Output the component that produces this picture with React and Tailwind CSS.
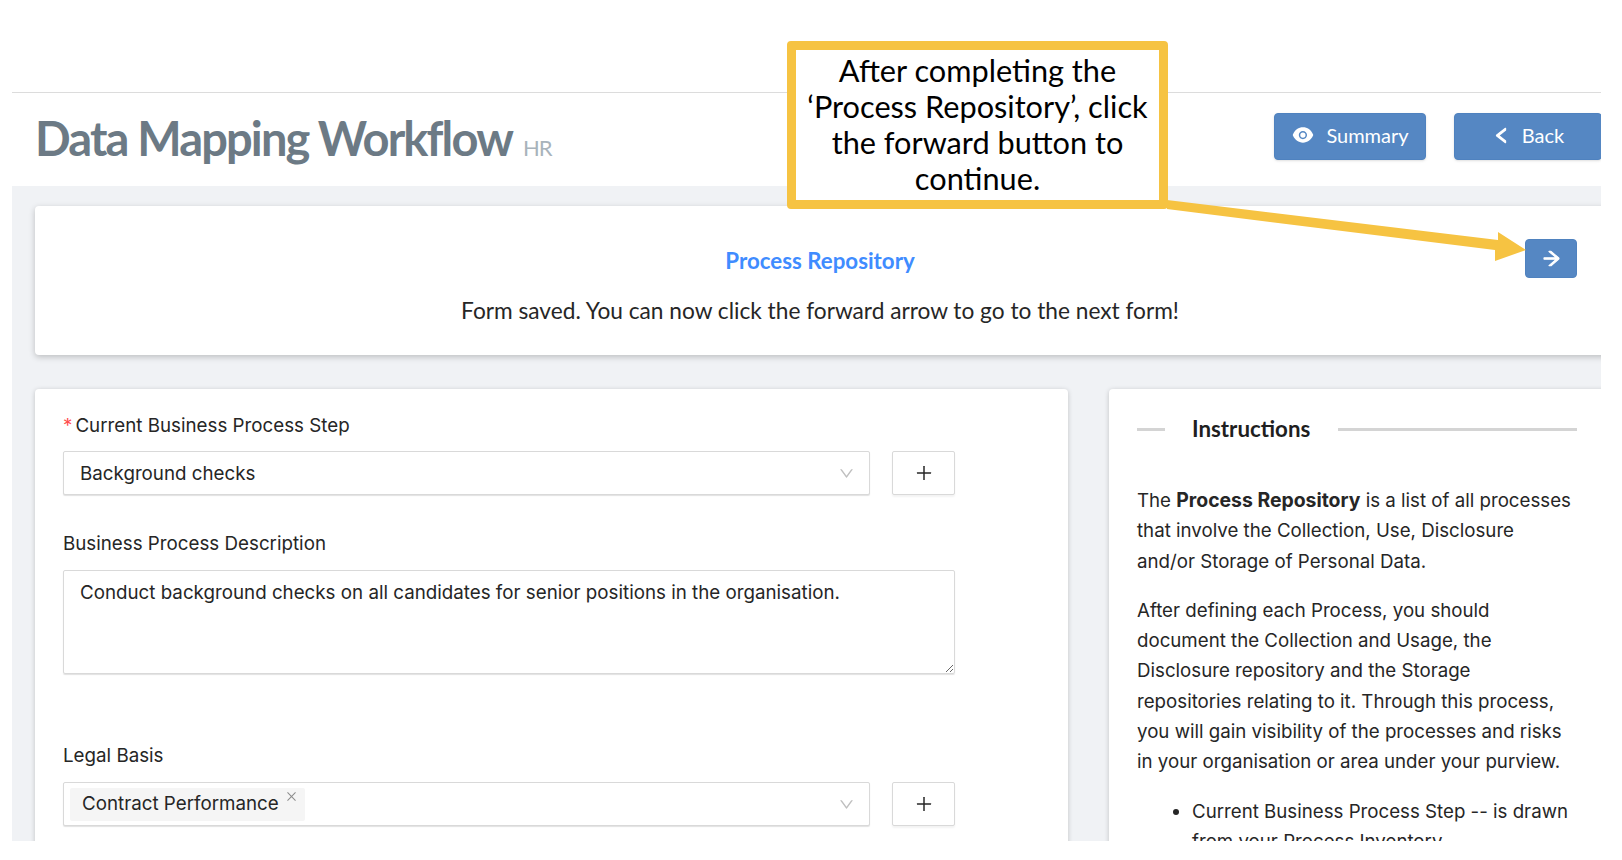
import React from "react";
import { AiFillEye, AiOutlineLeft, AiOutlineArrowRight, AiOutlinePlus, AiOutlineDown, AiOutlineClose } from "react-icons/ai";

const inter = "font-['Inter',sans-serif]";

function Btn({ icon, label, className }) {
  return (
    <div className={`flex h-[47px] items-center justify-center gap-[11px] rounded-[4px] border border-[#4f82bf] bg-[#5587c3] pb-[3px] text-[20px] text-white shadow-sm font-['Lato',sans-serif] ${className}`}>
      {icon}
      <span>{label}</span>
    </div>
  );
}

function SelectBox({ children }) {
  return (
    <div className="flex items-start gap-[22px]">
      <div className="flex h-[44px] w-[807px] items-center justify-between rounded-[2px] border border-[#d9d9d9] bg-white pr-[14px] shadow-[0_1px_1px_rgba(0,0,0,0.12)]">
        {children}
        <AiOutlineDown className="text-[#bfbfbf]" size={17} />
      </div>
      <div className="flex h-[44px] w-[63px] items-center justify-center rounded-[2px] border border-[#d9d9d9] bg-white text-[#262626] shadow-[0_2px_2px_rgba(0,0,0,0.05)]">
        <AiOutlinePlus size={20} />
      </div>
    </div>
  );
}

export default function App() {
  return (
    <div className="h-[860px] w-[1622px] overflow-hidden bg-white">
      <div className="relative ml-3 h-[841px] w-[1589px] overflow-hidden bg-white">
        <div className="h-[93px] border-b border-[#dcdcdc]" />
        <header className="flex h-[93px] items-start justify-between pl-[23px]">
          <div className="flex items-baseline pt-[9px]">
            <h1 className="font-['Lato',sans-serif] text-[47px] font-bold leading-[72px] tracking-[-1.85px] text-[#6c7a85]">Data Mapping Workflow</h1>
            <span className="ml-[11px] font-['Lato',sans-serif] text-[22px] tracking-[-1px] text-[#a8b3bb]">HR</span>
          </div>
          <div className="flex gap-[28px] pt-[20px]">
            <Btn className="w-[152px]" label="Summary" icon={<AiFillEye size={24} />} />
            <Btn className="mr-[-1px] w-[148px]" label="Back" icon={<AiOutlineLeft size={19} stroke="currentColor" strokeWidth={80} />} />
          </div>
        </header>
        <main className="h-[655px] w-[1620px] bg-[#f0f2f5] pl-[23px] pt-[20px]">
          <section className="relative h-[149px] rounded-[4px] bg-white text-center shadow-[0_2px_6px_rgba(0,0,0,0.22)]">
            <div className="w-[1570px] pt-[38px]">
              <h2 className="font-['Lato',sans-serif] text-[22.3px] font-bold leading-[34px] text-[#3f8cff]">Process Repository</h2>
              <p className="mt-[16px] font-['Lato',sans-serif] text-[22.7px] leading-[34px] text-[#262626]">Form saved. You can now click the forward arrow to go to the next form!</p>
            </div>
          </section>
          <div className="mt-[34px] flex gap-[41px]">
            <section className={`h-[470px] w-[1033px] shrink-0 rounded-[4px] bg-white px-[28px] pt-[23px] text-[18.75px] text-[#262626] shadow-[0_1px_5px_rgba(0,0,0,0.2)] ${inter}`}>
              <label className="block h-[39px] leading-[28px]"><span className="mr-[3px] text-[#ff4d4f]">*</span>Current Business Process Step</label>
              <SelectBox><span className="pl-[16px] pt-[2px]">Background checks</span></SelectBox>
              <label className="mt-[35px] block h-[40px] leading-[28px]">Business Process Description</label>
              <textarea
                defaultValue="Conduct background checks on all candidates for senior positions in the organisation."
                className="block h-[104px] w-[892px] resize-y rounded-[2px] border border-[#d9d9d9] px-[16px] py-[8px] leading-[28px] shadow-[0_1px_1px_rgba(0,0,0,0.12)] outline-none"
              />
              <label className="mt-[68px] block h-[40px] leading-[28px]">Legal Basis</label>
              <SelectBox>
                <span className="relative ml-[6px] flex h-[33px] w-[235px] items-center rounded-[2px] bg-[#f5f5f5] pl-[12px]">
                  Contract Performance
                  <AiOutlineClose className="absolute right-[7px] top-[2px] text-[#8c8c8c]" size={13} />
                </span>
              </SelectBox>
            </section>
            <section className={`h-[470px] w-[520px] shrink-0 overflow-hidden rounded-[4px] bg-white pl-[28px] pt-[23px] text-[18.7px] text-[#262626] shadow-[0_1px_5px_rgba(0,0,0,0.2)] ${inter}`}>
              <div className="flex w-[440px] items-center">
                <div className="h-[3px] w-[28px] bg-[#d4d4d4]" />
                <h3 className="pl-[27px] pr-[28px] font-['Lato',sans-serif] text-[22.3px] font-bold leading-[34px] text-[#1f1f1f]">Instructions</h3>
                <div className="h-[3px] flex-1 bg-[#d4d4d4]" />
              </div>
              <p className="mt-[39px] w-[438px] leading-[30.3px]">The <b className="text-[19.4px] font-bold">Process Repository</b> is a list of all processes that involve the Collection, Use, Disclosure and/or Storage of Personal Data.</p>
              <p className="mt-[19px] w-[438px] leading-[30.3px]">After defining each Process, you should document the Collection and Usage, the Disclosure repository and the Storage repositories relating to it. Through this process, you will gain visibility of the processes and risks in your organisation or area under your purview.</p>
              <ul className="mt-[19px] w-[445px] list-disc pl-[55px] leading-[30.3px]">
                <li>Current Business Process Step -- is drawn from your Process Inventory</li>
              </ul>
            </section>
          </div>
        </main>

        <button className="absolute left-[1513px] top-[239px] flex h-[39px] w-[52px] items-center justify-center rounded-[4px] border border-[#4f82bf] bg-[#5587c3] text-white">
          <AiOutlineArrowRight size={21} stroke="currentColor" strokeWidth={50} />
        </button>
        <svg className="absolute left-0 top-0" width="1589" height="300" viewBox="0 0 1589 300">
          <polygon fill="#f6c342" points="1155,200 1155,209 1483,250 1483,261 1514,250 1486,232 1486,240" />
        </svg>
        <div className="absolute left-[775px] top-[41px] flex h-[168px] w-[381px] items-center justify-center rounded-[4px] border-[9px] border-[#f6c342] bg-white text-center font-['Lato',sans-serif] text-[30.7px] leading-[36.2px] text-black">
          <p>After completing the<br />‘Process Repository’, click<br />the forward button to<br />continue.</p>
        </div>
      </div>
    </div>
  );
}
